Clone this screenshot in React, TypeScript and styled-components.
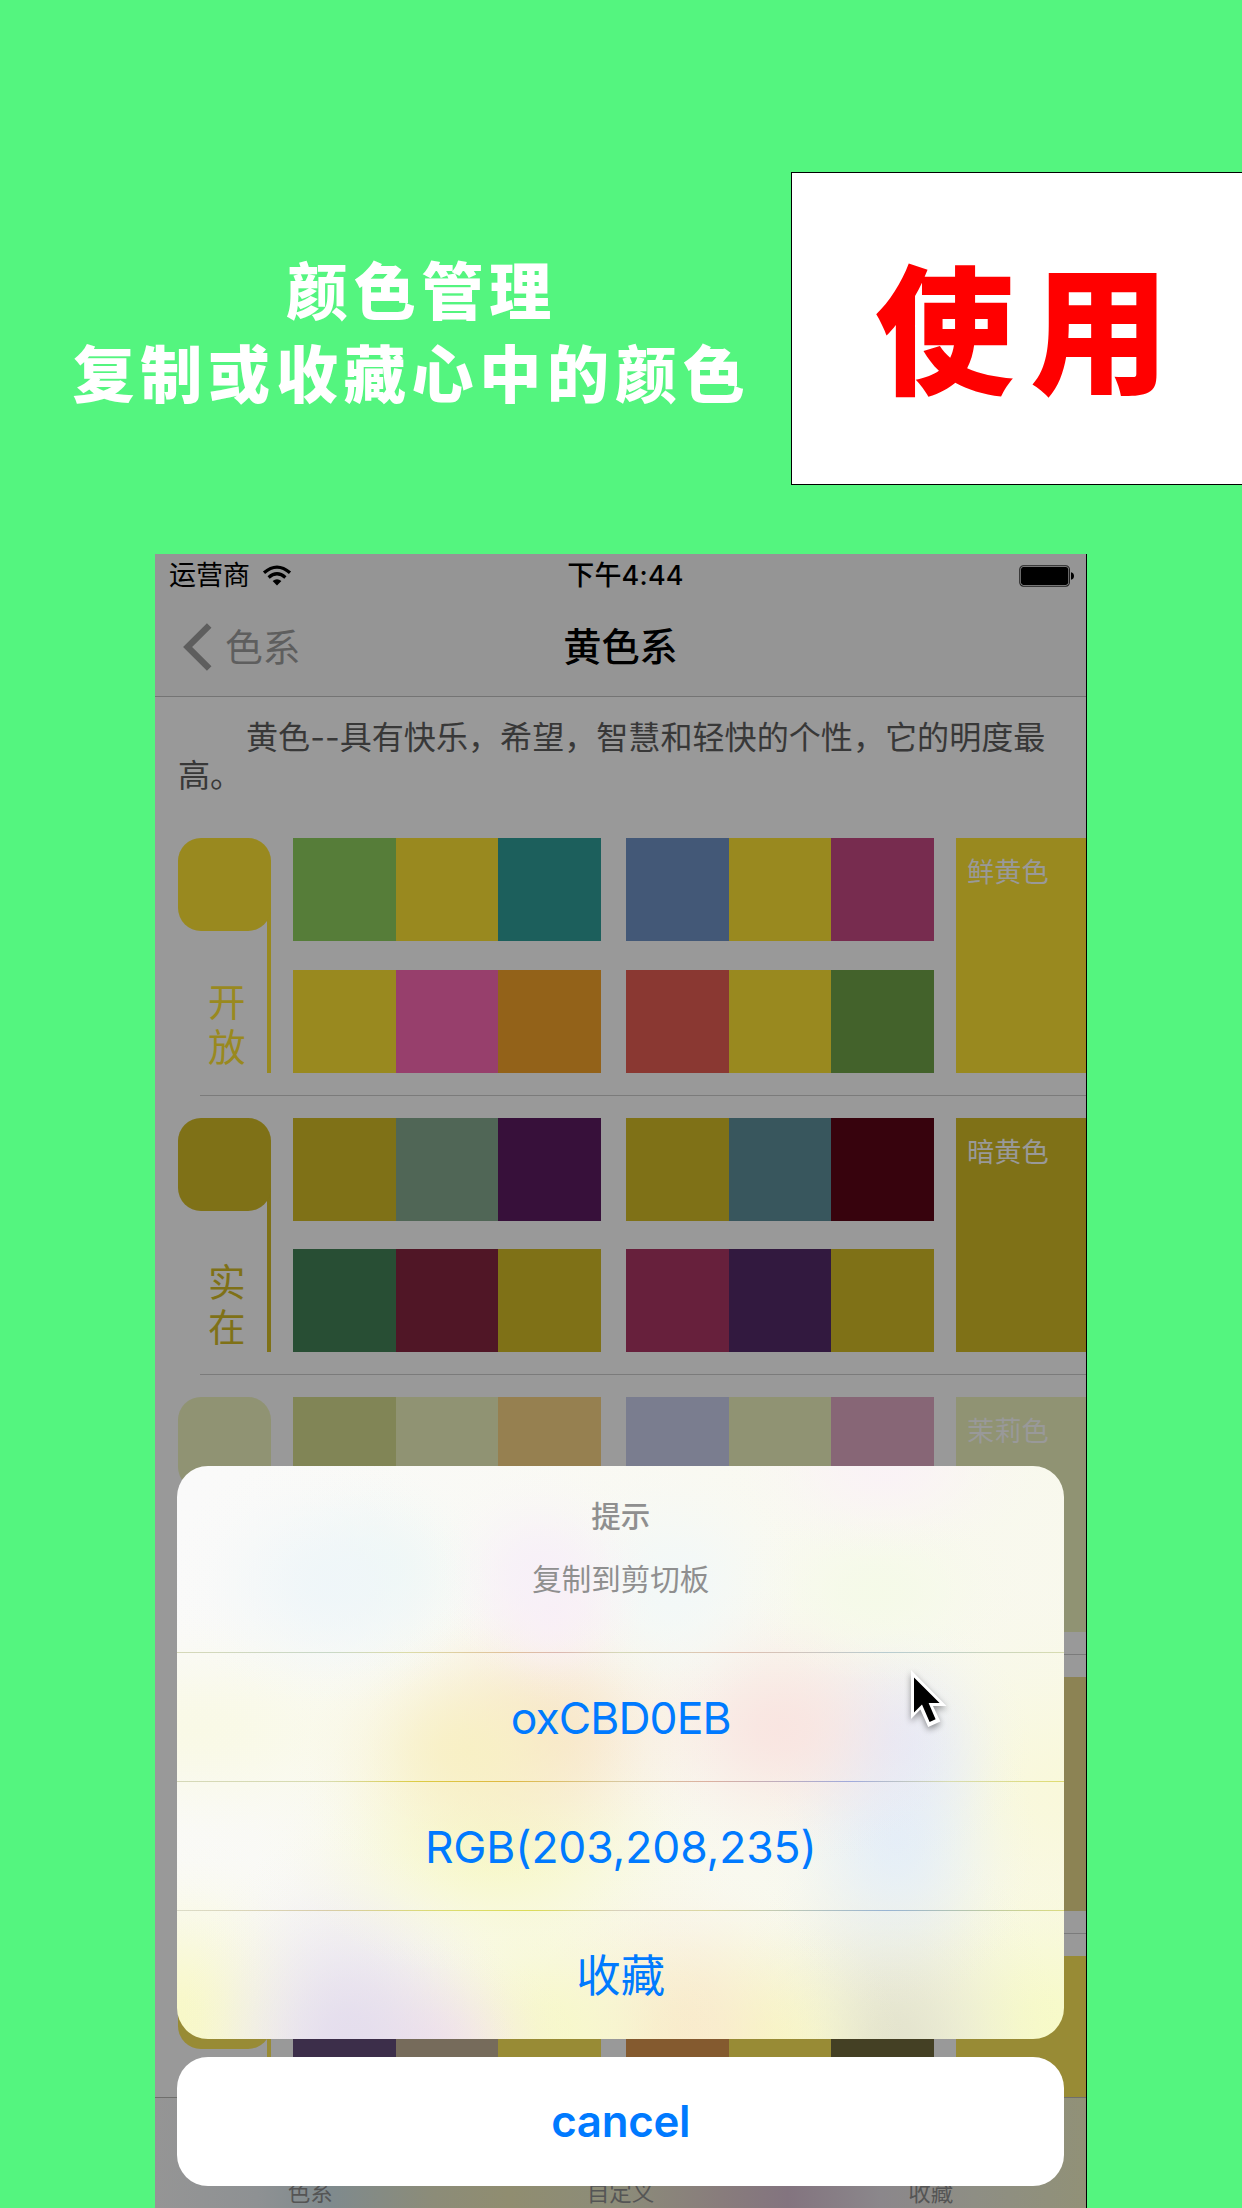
import React from "react";
import styled, { createGlobalStyle } from "styled-components";

const GlobalStyle = createGlobalStyle`
  * { box-sizing: border-box; }
  body {
    margin: 0;
    background: #54f57f;
    font-family: Inter, "Noto Sans CJK SC", sans-serif;
  }
`;

const Page = styled.main`
  width: 1242px;
  height: 2208px;
  overflow: hidden;
  background: #54f57f;
`;

/* ---------- banner ---------- */

const Banner = styled.header`
  display: flex;
  height: 554px;
`;

const Slogan = styled.h1`
  width: 791px;
  margin: 0;
  padding: 247px 0 0 32px;
  color: #fff;
  font: 900 62px/83px "Noto Sans CJK SC", sans-serif;
  letter-spacing: 5.8px;
  text-align: center;
`;

const SloganLine = styled.span<{ $indent?: number }>`
  display: block;
  padding-left: ${(p) => p.$indent ?? 0}px;
`;

const Stamp = styled.div`
  display: flex;
  flex: 1;
  align-items: center;
  height: 313px;
  margin-top: 172px;
  padding: 0 0 13px 83px;
  border: 1px solid #000;
  border-right: 0;
  background: #fff;
  color: #f00;
  font: 900 139px/1 "Noto Sans CJK SC", sans-serif;
  letter-spacing: 16px;
  white-space: nowrap;
`;

/* ---------- phone ---------- */

const Phone = styled.section`
  position: relative;
  display: flex;
  flex-direction: column;
  width: 932px;
  height: 1654px;
  margin-left: 155px;
  overflow: hidden;
  border-right: 1px solid #000;
  background: #999;
`;

const TopBars = styled.div`
  flex: none;
  height: 143px;
  border-bottom: 1px solid #747474;
  background: #959595;
`;

const BarGrid = styled.div`
  display: grid;
  grid-template-columns: 1fr auto 1fr;
  align-items: center;
`;

const StatusBar = styled(BarGrid)`
  height: 43px;
  padding: 0 11px 0 14px;
  color: #000;
  font-size: 27px;
  line-height: 43px;
`;

const Carrier = styled.div`
  display: flex;
  align-items: center;
  gap: 12px;
`;

const Clock = styled.div`
  padding-left: 7px;
  font-weight: 500;
  letter-spacing: 0.2px;
`;

const BatteryIcon = styled.svg`
  justify-self: end;
`;

const NavBar = styled(BarGrid)`
  height: 99px;
  padding: 0 28px;
`;

const BackButton = styled.div`
  display: flex;
  align-items: center;
  gap: 13px;
  color: #5e5e5e;
  font-size: 37.8px;
  line-height: 56px;
`;

const NavTitle = styled.h2`
  margin: 0;
  color: #000;
  font-size: 38.2px;
  font-weight: 500;
  line-height: 56px;
`;

const Intro = styled.p`
  flex: none;
  height: 119px;
  margin: 0;
  padding: 22px 20px 0 23px;
  color: #383838;
  font-size: 32.1px;
  line-height: 38px;
  text-indent: 68px;
`;

/* ---------- colour rows ---------- */

const RowBox = styled.div`
  flex: none;
  height: 279.5px;
`;

const RowBody = styled.div`
  display: flex;
  height: 278.5px;
  padding: 22.4px 0 22px 22.5px;
`;

const Separator = styled.div`
  height: 1px;
  margin-left: 45px;
  background: #7b7b7b;
`;

const Key = styled.div<{ $color: string }>`
  display: flex;
  flex-direction: column;
  width: 93px;
  margin-right: 22.5px;
  border-right: 4.5px solid transparent;
  border-image: linear-gradient(transparent 30px, ${(p) => p.$color} 30px) 1;
  color: ${(p) => p.$color};
`;

const KeySwatch = styled.div`
  flex: none;
  width: 93px;
  height: 93px;
  border-radius: 23px;
  background: currentColor;
`;

const KeyWord = styled.div`
  width: 38px;
  margin: 49px 0 0 30.5px;
  font-size: 37.5px;
  line-height: 45px;
  word-break: break-all;
`;

const Schemes = styled.div`
  display: grid;
  grid-template-columns: repeat(2, 307.5px);
  grid-template-rows: repeat(2, 103px);
  gap: 28.3px 25.5px;
  margin-right: 22.5px;
`;

const Scheme = styled.div`
  display: grid;
  grid-template-columns: repeat(3, 1fr);
`;

const Cell = styled.div<{ $color: string }>`
  background: ${(p) => p.$color};
`;

const NameBlock = styled.div<{ $color: string }>`
  flex: 1;
  padding: 15px 0 0 11px;
  background: ${(p) => p.$color};
  color: #999;
  font-size: 27.2px;
  line-height: 40px;
  white-space: nowrap;
`;

const TabBar = styled.nav`
  position: absolute;
  inset: auto 0 0 0;
  display: grid;
  grid-template-columns: repeat(3, 1fr);
  align-items: end;
  height: 111px;
  border-top: 1px solid #6f6f6c;
  background: linear-gradient(
    90deg, #959595 0, #8e9193 11%, #7f8a8d 19%, #8c8c78 30%, #908d70 38%,
    #8c8c79 50%, #887c7c 61%, #83747f 68%, #8b878b 78%, #8e8e84 88%, #919177 100%
  );
  color: #555;
  font-size: 22.5px;
  line-height: 30px;
  text-align: center;
`;

/* ---------- action sheet ---------- */

const tints: [number, number, number, number, string][] = [
  [150, 118, 160, 130, "#eff6f9"],
  [205, 105, 120, 110, "#eff8f5"],
  [364, 105, 120, 110, "#f7f0f8"],
  [375, 145, 100, 100, "#faeff5"],
  [495, 120, 140, 130, "#f2f8f8"],
  [708, 0, 160, 100, "#faf2f6"],
  [700, 125, 150, 100, "#f5fae8"],
  [290, 285, 180, 140, "#f8f0c4"],
  [370, 265, 180, 150, "#f8e4ca"],
  [605, 262, 180, 140, "#f9e4e0"],
  [715, 275, 140, 130, "#e5e9f8"],
  [720, 375, 140, 170, "#e4eef8"],
  [320, 385, 240, 140, "#f7f8c8"],
  [170, 580, 170, 220, "#e3dced"],
  [250, 580, 150, 110, "#f3e2ea"],
  [0, 560, 170, 190, "#f8f8c4"],
  [365, 565, 190, 170, "#f7f8c8"],
  [500, 565, 170, 170, "#f9e9cb"],
  [590, 580, 140, 150, "#f8f8c2"],
  [715, 585, 170, 220, "#e2e2cb"],
  [870, 560, 190, 180, "#f7fac6"],
  [887, 330, 230, 210, "#f9f8da"],
  [20, 265, 300, 130, "#f9f9e5"],
];

/* each tint fades out along a bell curve so neighbouring spots melt together */
const frosted = tints
  .map(
    ([x, y, rx, ry, c]) =>
      `radial-gradient(${rx}px ${ry}px at ${x}px ${y}px, ${c}f0 0, ${c}dc 15%, ${c}b0 30%, ${c}78 45%, ${c}44 60%, ${c}1c 75%, ${c}08 88%, ${c}00 100%)`
  )
  .join(",");

const Sheet = styled.div`
  position: absolute;
  top: 911.5px;
  left: 22.4px;
  display: flex;
  flex-direction: column;
  gap: 18px;
  width: 886.6px;
`;

const Card = styled.div`
  overflow: hidden;
  border-radius: 31px;
  background: ${frosted}, linear-gradient(115deg, #fafafa, #f9f9f2 45%, #f8f8ea);
`;

const SheetHeader = styled.div`
  height: 186px;
  padding-top: 28px;
  color: #8f8f8f;
  font-size: 29.5px;
  line-height: 44px;
  text-align: center;
`;

const SheetTitle = styled.div`
  margin-bottom: 19px;
  font-weight: 500;
`;

const Action = styled.div<{ $line: string; $tracking?: number }>`
  height: 129px;
  border-top: 1px solid;
  border-image: linear-gradient(90deg, ${(p) => p.$line}) 1;
  color: #007aff;
  font-size: 44.4px;
  line-height: 130px;
  letter-spacing: ${(p) => p.$tracking ?? 0}px;
  text-align: center;
`;

const CancelButton = styled.div`
  height: 129px;
  border-radius: 31px;
  background: #fff;
  color: #007aff;
  font-size: 43.8px;
  font-weight: 600;
  line-height: 130px;
  letter-spacing: -0.3px;
  text-align: center;
`;

const Pointer = styled.svg`
  position: absolute;
  top: 1112px;
  left: 752px;
  overflow: visible;
  filter: drop-shadow(0 3px 3px rgba(0, 0, 0, 0.4));
`;

type RowData = {
  color: string;
  word?: string;
  name?: string;
  schemes: string[][];
};

const rows: RowData[] = [
  {
    color: "#99891f",
    word: "开放",
    name: "鲜黄色",
    schemes: [
      ["#567d39", "#99891f", "#1c5f5c"],
      ["#435877", "#99891f", "#772c4f"],
      ["#99891f", "#973f6c", "#936219"],
      ["#8a3832", "#99891f", "#43622b"],
    ],
  },
  {
    color: "#7f7117",
    word: "实在",
    name: "暗黄色",
    schemes: [
      ["#7f7117", "#506656", "#37103a"],
      ["#7f7117", "#38565d", "#37030d"],
      ["#284e34", "#501626", "#7f7117"],
      ["#67203c", "#32193f", "#7f7117"],
    ],
  },
  {
    color: "#909373",
    name: "茉莉色",
    schemes: [
      ["#818556", "#909373", "#968050"],
      ["#7a7d8f", "#909373", "#876676"],
    ],
  },
  { color: "#8c8354", schemes: [] },
  {
    color: "#988b35",
    schemes: [
      ["#3c2e4a", "#766b5b", "#988b35"],
      ["#845a2f", "#988b35", "#444024"],
    ],
  },
];

function ColorRow({ color, word, name, schemes }: RowData) {
  return (
    <RowBox>
      <RowBody>
        <Key $color={color}>
          <KeySwatch />
          {word && <KeyWord>{word}</KeyWord>}
        </Key>
        <Schemes>
          {schemes.map((cells, i) => (
            <Scheme key={i}>
              {cells.map((c, j) => (
                <Cell key={j} $color={c} />
              ))}
            </Scheme>
          ))}
        </Schemes>
        <NameBlock $color={color}>{name}</NameBlock>
      </RowBody>
      <Separator />
    </RowBox>
  );
}

export default function App() {
  return (
    <Page>
      <GlobalStyle />
      <Banner>
        <Slogan>
          <SloganLine $indent={20}>颜色管理</SloganLine>
          <SloganLine>复制或收藏心中的颜色</SloganLine>
        </Slogan>
        <Stamp>使用</Stamp>
      </Banner>
      <Phone>
        <TopBars>
          <StatusBar>
            <Carrier>
              运营商
              <svg width="30" height="22" viewBox="0 0 30 22">
                <g fill="none" stroke="#000" strokeWidth="3.3">
                  <path d="M2 7.8Q15 -3.6 28 7.8" />
                  <path d="M6.6 12.4Q15 5.2 23.4 12.4" />
                </g>
                <path d="M10.6 16Q15 12.4 19.4 16L15 20.6Z" />
              </svg>
            </Carrier>
            <Clock>下午4:44</Clock>
            <BatteryIcon width="56" height="22" viewBox="0 0 56 22">
              <rect x="0.8" y="0.8" width="49.6" height="20.4" rx="3.6" fill="none" stroke="#1c1c1c" strokeWidth="1.1" />
              <rect x="2" y="2" width="47.2" height="18" rx="2.4" />
              <path d="M52 7.2Q55 8 55 11T52 14.8Z" />
            </BatteryIcon>
          </StatusBar>
          <NavBar>
            <BackButton>
              <svg width="29" height="48" viewBox="0 0 29 48">
                <path d="M26.2 2.4L4.6 24L26.2 45.6" fill="none" stroke="#5e5e5e" strokeWidth="6.4" />
              </svg>
              色系
            </BackButton>
            <NavTitle>黄色系</NavTitle>
          </NavBar>
        </TopBars>
        <Intro>黄色--具有快乐，希望，智慧和轻快的个性，它的明度最高。</Intro>
        {rows.map((row) => (
          <ColorRow key={row.color} {...row} />
        ))}
        <TabBar>
          <span>色系</span>
          <span>自定义</span>
          <span>收藏</span>
        </TabBar>
        <Sheet>
          <Card>
            <SheetHeader>
              <SheetTitle>提示</SheetTitle>
              复制到剪切板
            </SheetHeader>
            <Action $line="#d5d8b8, #c9d8c8 17%, #dcdca8 26%, #e0c29a 37%, #dcb8b0 43%, #d5d8b8 50%, #e0c0b0 63%, #b8ccd0 80%, #d8dcb0" $tracking={-0.9}>
              oxCBD0EB
            </Action>
            <Action $line="#d5d8b8, #d8dcb0 17%, #dccc44 27%, #dfb840 37%, #d8c8a0 50%, #dcb0a0 60%, #a0aadc 76%, #d8dcb0 87%, #e0dc70" $tracking={-0.1}>
              RGB(203,208,235)
            </Action>
            <Action $line="#dcdcc8, #d8cca8 17%, #dcdc70 30%, #dcdc58 40%, #d8d0c0 50%, #dcd8a0 60%, #98b4d4 80%, #dcdc80">收藏</Action>
          </Card>
          <CancelButton>cancel</CancelButton>
        </Sheet>
        <Pointer width="44" height="60" viewBox="0 0 44 60">
          <path d="M4 4L39.5 40H26L33.4 55.4L21.2 61L13.4 43.6L4 53Z" fill="#fff" />
          <path d="M7 11.5L32.6 37H21.6L28.6 53.2L22.6 56L15 38.6L7 46.4Z" fill="#000" />
        </Pointer>
      </Phone>
    </Page>
  );
}
